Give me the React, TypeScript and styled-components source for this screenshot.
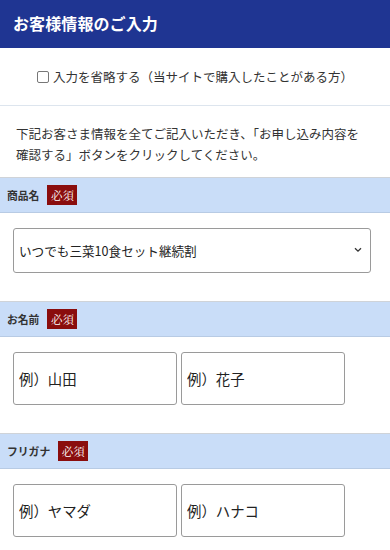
import styled, { createGlobalStyle } from 'styled-components';

const GlobalStyle = createGlobalStyle`
  html, body {
    margin: 0;
    padding: 0;
    background: #fff;
  }
  body {
    font-family: "Noto Sans CJK JP", "Noto Sans", sans-serif;
    color: #333;
  }
  * {
    box-sizing: border-box;
  }
`;

const Page = styled.div`
  width: 390px;
`;

const Header = styled.header`
  height: 48px;
  background: #1f3592;
  display: flex;
  align-items: center;
  padding: 0 13px 2px;
`;

const Title = styled.h1`
  margin: 0;
  font-size: 16px;
  font-weight: 700;
  color: #fff;
  letter-spacing: 0.1px;
`;

const SkipRow = styled.label`
  height: 58px;
  display: flex;
  align-items: center;
  justify-content: center;
  gap: 4px;
  border-bottom: 1px solid #dde5ee;
  font-size: 12.5px;
  color: #333;
`;

const Check = styled.input`
  appearance: none;
  margin: 0;
  width: 12px;
  height: 12px;
  border: 1px solid #777;
  border-radius: 2px;
  background: #fff;
`;

const Lead = styled.p`
  margin: 0;
  padding: 17px 22px 12px 16px;
  font-size: 12.5px;
  line-height: 21px;
  color: #333;
`;

const Band = styled.div`
  height: 36px;
  display: flex;
  align-items: center;
  gap: 8px;
  padding: 0 7px;
  background: #c9ddf8;
  border-top: 1px solid #cfd3d8;
  border-bottom: 1px solid #b8cbe4;
`;

const BandLabel = styled.span`
  font-size: 10.8px;
  font-weight: 700;
  color: #333;
`;

const Required = styled.span`
  display: inline-flex;
  align-items: center;
  justify-content: center;
  width: 30px;
  height: 20px;
  background: #8a0d0d;
  color: #fff;
  font-family: "Noto Serif CJK JP", "Noto Sans CJK JP", serif;
  font-size: 11.5px;
`;

const Field = styled.div`
  padding: 15px 13px 28px;
  display: flex;
  gap: 4px;
`;

const SelectWrap = styled.div`
  position: relative;
  width: 358px;
  height: 45px;
`;

const Select = styled.select`
  appearance: none;
  width: 100%;
  height: 100%;
  border: 1px solid #9a9a9a;
  border-radius: 3px;
  background: #fff;
  padding: 0 24px 0 5px;
  font-family: inherit;
  font-size: 12.6px;
  color: #222;
`;

const Chevron = styled.svg`
  position: absolute;
  right: 9px;
  top: 19px;
  pointer-events: none;
`;

const TextInput = styled.input`
  width: 164px;
  height: 53px;
  margin: 0;
  border: 1px solid #9a9a9a;
  border-radius: 3px;
  background: #fff;
  padding: 0 5px;
  font-family: inherit;
  font-size: 14.4px;
  color: #222;
  &::placeholder {
    color: #222;
    opacity: 1;
  }
`;

type SectionProps = { label: string; children: React.ReactNode };

const Section = ({ label, children }: SectionProps) => (
  <>
    <Band>
      <BandLabel>{label}</BandLabel>
      <Required>必須</Required>
    </Band>
    <Field>{children}</Field>
  </>
);

const App = () => {
  return (
    <Page>
      <GlobalStyle />
      <Header>
        <Title>お客様情報のご入力</Title>
      </Header>
      <SkipRow>
        <Check type="checkbox" />
        入力を省略する（当サイトで購入したことがある方）
      </SkipRow>
      <Lead>
        下記お客さま情報を全てご記入いただき、「お申し込み内容を確認する」ボタンをクリックしてください。
      </Lead>
      <Section label="商品名">
        <SelectWrap>
          <Select defaultValue="a">
            <option value="a">いつでも三菜10食セット継続割</option>
          </Select>
          <Chevron width="8" height="6" viewBox="0 0 8 6">
            <path d="M1 1.2 L4 4.2 L7 1.2" fill="none" stroke="#333" strokeWidth="1.3" />
          </Chevron>
        </SelectWrap>
      </Section>
      <Section label="お名前">
        <TextInput placeholder="例）山田" />
        <TextInput placeholder="例）花子" />
      </Section>
      <Section label="フリガナ">
        <TextInput placeholder="例）ヤマダ" />
        <TextInput placeholder="例）ハナコ" />
      </Section>
    </Page>
  );
};

export default App;
